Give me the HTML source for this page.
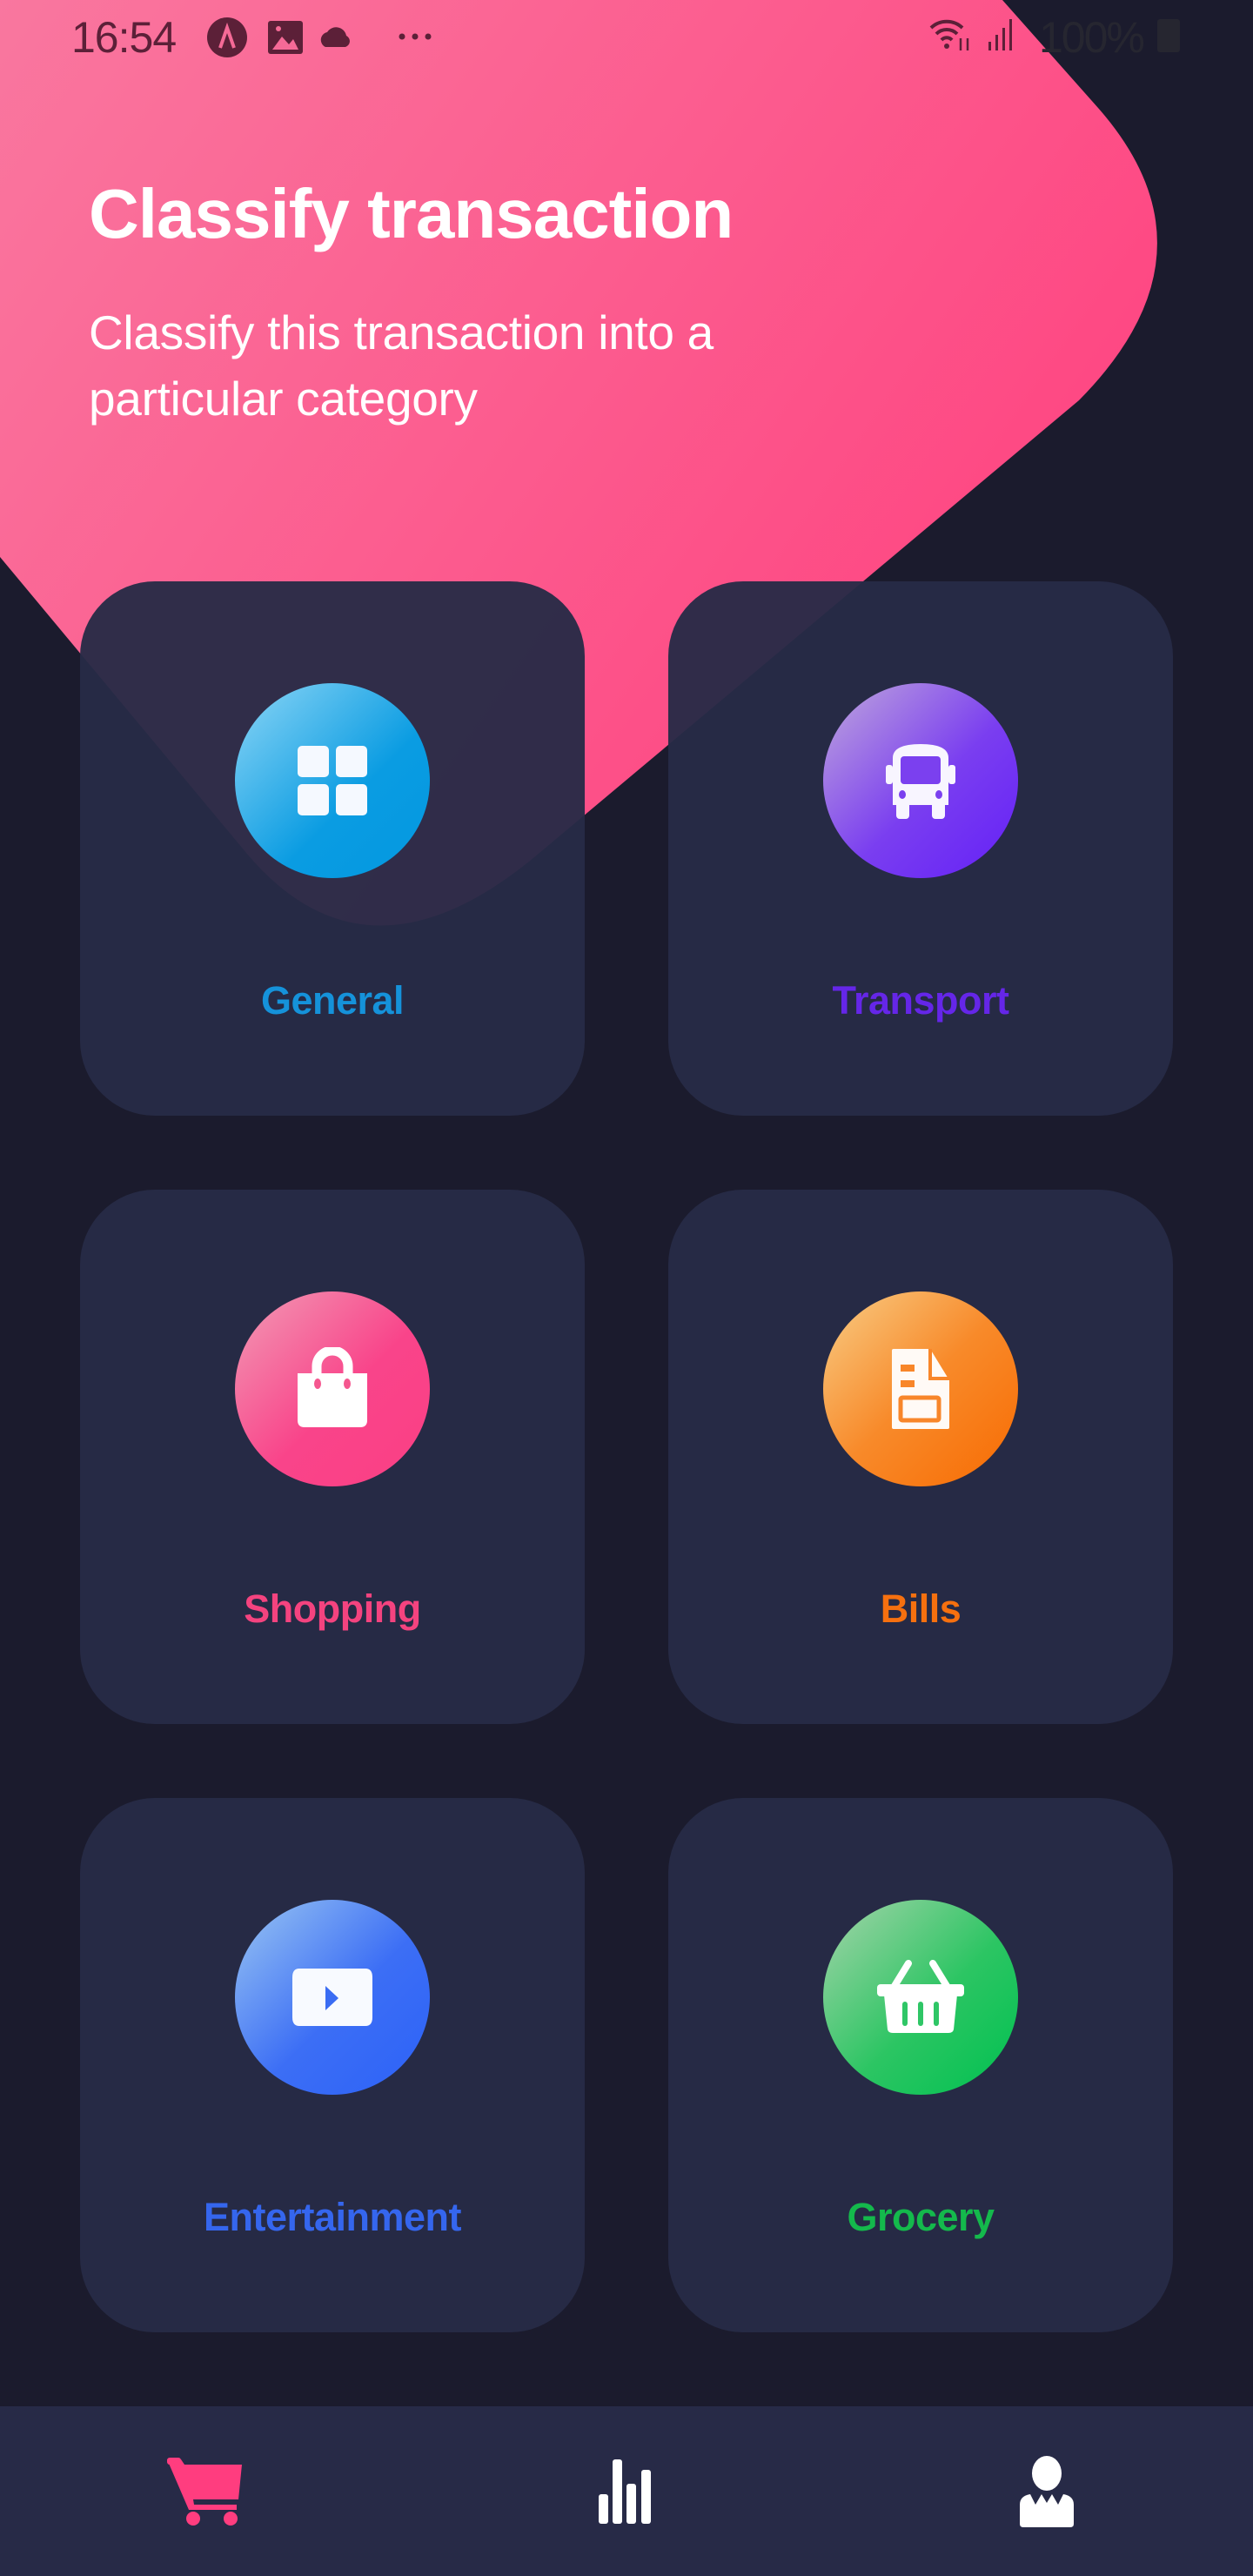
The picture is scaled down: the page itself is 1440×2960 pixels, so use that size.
<!DOCTYPE html>
<html><head><meta charset="utf-8">
<style>
*{margin:0;padding:0;box-sizing:border-box}
html,body{width:1440px;height:2960px;overflow:hidden;background:#1b1b2d;font-family:"Liberation Sans",sans-serif}
.abs{position:absolute}
.card{position:absolute;width:580px;height:614px;border-radius:86px;background:rgba(39,43,70,0.955)}
.circ{position:absolute;left:178px;top:117px;width:224px;height:224px;border-radius:50%;display:flex;align-items:center;justify-content:center}
.lbl{position:absolute;left:0;width:100%;top:456px;text-align:center;font-weight:bold;font-size:45px;letter-spacing:-0.5px}
</style></head><body>
<svg class="abs" style="left:0;top:0" width="1440" height="1200">
<defs><linearGradient id="pk" x1="0" y1="0" x2="1300" y2="900" gradientUnits="userSpaceOnUse">
<stop offset="0" stop-color="#f9779f"/><stop offset="1" stop-color="#ff3e7d"/></linearGradient></defs>
<path d="M0,0 L1152,0 L1262,124 Q1408,290 1240,460 L620,980 Q423,1147 283,980 L0,640 Z" fill="url(#pk)"/>
</svg>
<!-- status bar -->
<div class="abs" style="left:82px;top:14px;font-size:50px;color:#5c2038;letter-spacing:-1px">16:54</div>
<svg class="abs" style="left:236px;top:18px" width="290" height="50">
<circle cx="25" cy="25" r="23" fill="#5c2038"/><path d="M17,37 L25,14 L33,37" stroke="#f56a97" stroke-width="4" fill="none"/>
<rect x="72" y="6" width="40" height="38" rx="3" fill="#5c2038"/><path d="M77,39 L88,24 L96,33 L101,27 L107,39Z" fill="#f56a97"/><circle cx="84" cy="15" r="3" fill="#f56a97"/>
<path d="M138,36 a9,9 0 0 1 2,-17 a12,12 0 0 1 22,4 a7,7 0 0 1 -1,13Z" fill="#5c2038"/>
<circle cx="226" cy="24" r="3.5" fill="#5c2038"/><circle cx="241" cy="24" r="3.5" fill="#5c2038"/><circle cx="256" cy="24" r="3.5" fill="#5c2038"/>
</svg>
<svg class="abs" style="left:1066px;top:14px" width="110" height="50">
<path d="M4,18 a26,26 0 0 1 36,0 M10,25 a17,17 0 0 1 24,0 M16,32 a8,8 0 0 1 12,0" stroke="#5c2038" stroke-width="4" fill="none"/>
<circle cx="22" cy="39" r="3" fill="#5c2038"/>
<path d="M38,30 v14 M46,30 v14" stroke="#5c2038" stroke-width="2.5"/>
<rect x="70" y="34" width="3" height="10" fill="#5c2038"/><rect x="78" y="26" width="3" height="18" fill="#5c2038"/><rect x="86" y="18" width="3" height="26" fill="#5c2038"/><rect x="94" y="8" width="3" height="36" fill="#5c2038"/>
</svg>
<div class="abs" style="left:1194px;top:14px;font-size:50px;color:#262630;letter-spacing:-2px">100%</div>
<div class="abs" style="left:1330px;top:22px;width:26px;height:38px;background:#262630;border-radius:3px"></div>
<!-- heading -->
<div class="abs" style="left:102px;top:200px;font-size:80px;font-weight:bold;color:#fff;letter-spacing:-1px">Classify transaction</div>
<div class="abs" style="left:102px;top:344px;font-size:55px;line-height:76px;color:#fff;width:900px;letter-spacing:-0.3px">Classify this transaction into a<br>particular category</div>

<!-- cards -->
<div class="card" style="left:92px;top:668px">
 <div class="circ" style="background:linear-gradient(135deg,#8dd6f6 0%,#0a9ce2 60%,#0398e0 100%)">
  <svg width="84" height="84" viewBox="0 0 84 84"><rect x="2" y="2" width="36" height="36" rx="5" fill="#f5f9ff"/><rect x="46" y="2" width="36" height="36" rx="5" fill="#f5f9ff"/><rect x="2" y="46" width="36" height="36" rx="5" fill="#f5f9ff"/><rect x="46" y="46" width="36" height="36" rx="5" fill="#f5f9ff"/></svg>
 </div><div class="lbl" style="color:#1592da">General</div></div>
<div class="card" style="left:768px;top:668px">
 <div class="circ" style="background:linear-gradient(135deg,#c0a8dc 0%,#7a3ef0 55%,#6420f7 100%)">
  <svg width="84" height="96" viewBox="6 0 84 96"><path d="M16,22 Q16,6 48,6 Q80,6 80,22 V76 H16Z" fill="#f8f5ff"/><rect x="8" y="30" width="8" height="22" rx="3" fill="#f8f5ff"/><rect x="80" y="30" width="8" height="22" rx="3" fill="#f8f5ff"/><rect x="20" y="72" width="15" height="20" rx="4" fill="#f8f5ff"/><rect x="61" y="72" width="15" height="20" rx="4" fill="#f8f5ff"/><rect x="25" y="20" width="46" height="32" rx="4" fill="#7b40ef"/><ellipse cx="27" cy="64" rx="4" ry="5" fill="#7b40ef"/><ellipse cx="69" cy="64" rx="4" ry="5" fill="#7b40ef"/></svg>
 </div><div class="lbl" style="color:#6526e8">Transport</div></div>
<div class="card" style="left:92px;top:1367px">
 <div class="circ" style="background:linear-gradient(135deg,#f19bb5 0%,#f9448a 55%,#fb3f84 100%)">
  <svg width="84" height="96" viewBox="0 0 84 96"><path d="M24,30 V22 a18,18 0 0 1 36,0 V30" stroke="#fff" stroke-width="11" fill="none"/><path d="M2,30 H82 V84 Q82,92 74,92 H10 Q2,92 2,84Z" fill="#fff"/><ellipse cx="25" cy="42" rx="4" ry="6" fill="#f5578f"/><ellipse cx="59" cy="42" rx="4" ry="6" fill="#f5578f"/></svg>
 </div><div class="lbl" style="color:#f4437f">Shopping</div></div>
<div class="card" style="left:768px;top:1367px">
 <div class="circ" style="background:linear-gradient(135deg,#f8cd86 0%,#f88a2a 50%,#f76b02 100%)">
  <svg width="70" height="96" viewBox="0 0 70 96"><path d="M2,4 Q2,2 4,2 H46 L68,38 V92 Q68,94 66,94 H4 Q2,94 2,92Z" fill="#fffaf6"/><path d="M46,2 V36 H68" stroke="#f8862a" stroke-width="4" fill="none"/><rect x="12" y="20" width="16" height="8" fill="#f8862a"/><rect x="12" y="38" width="16" height="8" fill="#f8862a"/><rect x="12" y="58" width="44" height="26" rx="2" stroke="#f8862a" stroke-width="5" fill="none"/></svg>
 </div><div class="lbl" style="color:#f6700f">Bills</div></div>
<div class="card" style="left:92px;top:2066px">
 <div class="circ" style="background:linear-gradient(135deg,#9ac6f2 0%,#3c6ef5 55%,#2c62f8 100%)">
  <svg width="96" height="70" viewBox="0 0 96 70"><path d="M10,2 H86 Q94,2 94,12 V58 Q94,68 86,68 H10 Q2,68 2,58 V12 Q2,2 10,2Z" fill="#f8faff"/><path d="M40,22 L55,36 L40,50Z" fill="#3a6cf3"/></svg>
 </div><div class="lbl" style="color:#3566ee">Entertainment</div></div>
<div class="card" style="left:768px;top:2066px">
 <div class="circ" style="background:linear-gradient(135deg,#a6d4ab 0%,#2cc563 55%,#00c150 100%)">
  <svg width="104" height="86" viewBox="0 0 104 86"><path d="M22,30 L38,4 M82,30 L66,4" stroke="#fff" stroke-width="8" stroke-linecap="round"/><rect x="2" y="28" width="100" height="14" rx="4" fill="#fff"/><path d="M10,40 H94 L90,80 Q89,84 84,84 H20 Q15,84 14,80Z" fill="#fff"/><rect x="31" y="48" width="6" height="28" rx="3" fill="#2fc666"/><rect x="49" y="48" width="6" height="28" rx="3" fill="#2fc666"/><rect x="67" y="48" width="6" height="28" rx="3" fill="#2fc666"/></svg>
 </div><div class="lbl" style="color:#14b94c">Grocery</div></div>

<!-- nav -->
<div class="abs" style="left:0;top:2765px;width:1440px;height:195px;background:#272a47"></div>
<svg class="abs" style="left:190px;top:2822px" width="92" height="82" viewBox="0 0 92 82">
<path d="M2,4 H18 L22,10 H88 L84,50 H32 L33,56 H82 V62 H27 Z" fill="#ff3d7f"/><rect x="2" y="2" width="16" height="8" rx="3" fill="#ff3d7f"/><circle cx="32" cy="72" r="8" fill="#ff3d7f"/><circle cx="75" cy="72" r="8" fill="#ff3d7f"/></svg>
<svg class="abs" style="left:686px;top:2824px" width="64" height="76" viewBox="0 0 64 76">
<rect x="2" y="42" width="11" height="34" rx="3" fill="#fff"/><rect x="18" y="2" width="11" height="74" rx="3" fill="#fff"/><rect x="34" y="30" width="11" height="46" rx="3" fill="#fff"/><rect x="51" y="14" width="11" height="62" rx="3" fill="#fff"/></svg>
<svg class="abs" style="left:1170px;top:2822px" width="66" height="82" viewBox="0 0 66 82">
<ellipse cx="33" cy="20" rx="17" ry="20" fill="#fff"/><path d="M2,56 Q2,46 14,44 L20,56 L27,44 L33,54 L39,44 L46,56 L52,44 Q64,46 64,56 V78 Q64,82 60,82 H6 Q2,82 2,78Z" fill="#fff"/></svg>
</body></html>
